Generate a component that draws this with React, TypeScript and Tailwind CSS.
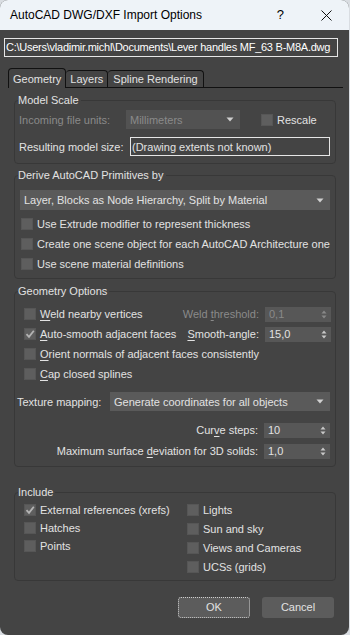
import React from "react";

const label = "text-[11px] leading-[16px] text-[#e2e2e2] whitespace-nowrap";
const dim = "text-[11px] leading-[16px] text-[#8a8a8a] whitespace-nowrap";

function Box({ checked }: { checked?: boolean }) {
	return (
		<span className="w-[12px] h-[12px] shrink-0 bg-[#5e5e5e] border border-[#565656] flex items-center justify-center">
			{checked && (
				<svg width="10" height="10" viewBox="0 0 10 10">
					<path d="M1.5 5.2 L4 7.8 L8.8 1.8" stroke="#b4b4b4" strokeWidth="1.8" fill="none" />
				</svg>
			)}
		</span>
	);
}

function Arrow() {
	return (
		<svg width="8" height="5" viewBox="0 0 8 5" className="shrink-0">
			<path d="M0.5 0.5 H7.5 L4 4.5 Z" fill="#d0d0d0" />
		</svg>
	);
}

function Spin({ value, disabled }: { value: string; disabled?: boolean }) {
	return (
		<div className="w-[66px] h-[15px] bg-[#575757] flex items-center justify-between pl-[4px] pr-[4px]">
			<span className={disabled ? dim : label}>{value}</span>
			<svg width="6" height="9" viewBox="0 0 6 9">
				<path d="M0.5 3.5 L3 0.5 L5.5 3.5 Z M0.5 5.5 L3 8.5 L5.5 5.5 Z" fill={disabled ? "#888" : "#c8c8c8"} />
			</svg>
		</div>
	);
}

function Check({ text, checked, u, className = "" }: { text: string; checked?: boolean; u?: number; className?: string }) {
	return (
		<div className={`flex items-center gap-[4px] ${className}`}>
			<Box checked={checked} />
			<span className={label}>
				{u !== undefined ? (
					<>
						{text.slice(0, u)}
						<span className="underline underline-offset-2">{text[u]}</span>
						{text.slice(u + 1)}
					</>
				) : (
					text
				)}
			</span>
		</div>
	);
}

function Group({ title, className = "", children }: { title: string; className?: string; children: React.ReactNode }) {
	return (
		<fieldset className={`border border-[#383838] rounded-[4px] px-[4px] ${className}`}>
			<legend className={`${label} px-[0px] -ml-[1px] pr-[2px]`}>{title}</legend>
			{children}
		</fieldset>
	);
}

export default function App() {
	return (
		<div className="w-[350px] h-[635px] bg-[#d9dde2] font-['Liberation_Sans',Arial,sans-serif]">
			<div className="w-[349px] h-[635px] rounded-[8px] overflow-hidden bg-[#444444] flex flex-col">
				{/* title bar */}
				<div className="h-[30px] bg-[#eef3f8] flex items-center pl-[10px] shrink-0">
					<span className="text-[12px] text-black flex-1">AutoCAD DWG/DXF Import Options</span>
					<span className="text-[13px] text-black mr-[37px]">?</span>
					<svg width="11" height="11" viewBox="0 0 11 11" className="mr-[17px]">
						<path d="M0.5 0.5 L10.5 10.5 M10.5 0.5 L0.5 10.5" stroke="#111" strokeWidth="1" />
					</svg>
				</div>

				{/* path */}
				<div className="mt-[8px] ml-[4px] w-[334px] h-[19px] border border-[#e6e6e6] text-[11px] leading-[17px] text-white pl-[1px] whitespace-nowrap overflow-hidden tracking-[-0.25px]">
					C:\Users\vladimir.michl\Documents\Lever handles MF_63 B-M8A.dwg
				</div>

				{/* tabs */}
				<div className="mt-[12px] ml-[8px] w-[335px] h-[19px] flex items-end border-b border-[#111]">
					<div className="h-[20px] -mb-[1px] px-[4px] border border-b-0 border-[#111] rounded-t-[4px] bg-[#444444] flex items-center">
						<span className={label}>Geometry</span>
					</div>
					<div className="h-[17px] px-[4px] border border-b-0 border-l-0 border-[#111] rounded-t-[4px] flex items-center">
						<span className={label}>Layers</span>
					</div>
					<div className="h-[17px] px-[5px] border border-b-0 border-l-0 border-[#111] rounded-t-[4px] flex items-center">
						<span className={label}>Spline Rendering</span>
					</div>
				</div>

				<div className="ml-[14px] w-[322px] flex flex-col">
					<Group title="Model Scale" className="mt-[4px] pb-[7px]">
						<div className="flex items-center mt-[2px] h-[19px]">
							<span className={`${dim} w-[107px]`}>Incoming file units:</span>
							<div className="w-[114px] h-[19px] bg-[#525252] flex items-center justify-between pl-[4px] pr-[6px]">
								<span className={dim}>Millimeters</span>
								<Arrow />
							</div>
							<Check text="Rescale" className="ml-[21px]" />
						</div>
						<div className="flex items-center mt-[8px]">
							<span className={`${label} w-[111px]`}>Resulting model size:</span>
							<div className="w-[200px] h-[19px] border border-[#e6e6e6] flex items-center pl-[1px]">
								<span className={label}>(Drawing extents not known)</span>
							</div>
						</div>
					</Group>

					<Group title="Derive AutoCAD Primitives by" className="mt-[3px] pb-[4px]">
						<div className="ml-[1px] mt-[7px] w-[310px] h-[20px] bg-[#5a5a5a] flex items-center justify-between pl-[4px] pr-[6px]">
							<span className={label}>Layer, Blocks as Node Hierarchy, Split by Material</span>
							<Arrow />
						</div>
						<div className="flex flex-col ml-[2px] mt-[4px]">
							<Check text="Use Extrude modifier to represent thickness" className="h-[20px]" />
							<Check text="Create one scene object for each AutoCAD Architecture one" className="h-[20px]" />
							<Check text="Use scene material definitions" className="h-[20px]" />
						</div>
					</Group>

					<Group title="Geometry Options" className="mt-[4px] pb-[7px]">
						<div className="flex flex-col mt-[5px]">
							<div className="flex items-center h-[20px]">
								<Check text="Weld nearby vertices" u={0} className="ml-[5px] flex-1" />
								<span className={`${dim} mr-[6px]`}>
									Weld <span className="underline underline-offset-2">t</span>hreshold:
								</span>
								<Spin value="0,1" disabled />
							</div>
							<div className="flex items-center h-[20px]">
								<Check text="Auto-smooth adjacent faces" checked u={0} className="ml-[5px] flex-1" />
								<span className={`${label} mr-[6px]`}>
									<span className="underline underline-offset-2">S</span>mooth-angle:
								</span>
								<Spin value="15,0" />
							</div>
							<Check text="Orient normals of adjacent faces consistently" u={0} className="ml-[5px] h-[20px]" />
							<Check text="Cap closed splines" u={0} className="ml-[5px] h-[20px]" />
						</div>
						<div className="flex items-center mt-[8px] -ml-[2px]">
							<span className={`${label} w-[93px]`}>Texture mapping:</span>
							<div className="w-[220px] h-[19px] bg-[#5a5a5a] flex items-center justify-between pl-[4px] pr-[6px]">
								<span className={label}>Generate coordinates for all objects</span>
								<Arrow />
							</div>
						</div>
						<div className="flex items-center justify-end mt-[11px] pr-[1px]">
							<span className={`${label} mr-[6px]`}>
								Cur<span className="underline underline-offset-2">v</span>e steps:
							</span>
							<Spin value="10" />
						</div>
						<div className="flex items-center justify-end mt-[5px] pr-[1px]">
							<span className={`${label} mr-[6px]`}>
								Maximum surface <span className="underline underline-offset-2">d</span>eviation for 3D solids:
							</span>
							<Spin value="1,0" />
						</div>
					</Group>

					<Group title="Include" className="mt-[17px] pb-[4px]">
						<div className="grid grid-cols-[168px_1fr] mt-[1px]">
							<div className="flex flex-col ml-[5px]">
								<Check text="External references (xrefs)" checked className="h-[18px]" />
								<Check text="Hatches" className="h-[18px]" />
								<Check text="Points" className="h-[18px]" />
							</div>
							<div className="flex flex-col -mt-[1px]">
								<Check text="Lights" className="h-[19px]" />
								<Check text="Sun and sky" className="h-[19px]" />
								<Check text="Views and Cameras" className="h-[19px]" />
								<Check text="UCSs (grids)" className="h-[19px]" />
							</div>
						</div>
					</Group>
				</div>

				{/* buttons */}
				<div className="flex gap-[12px] mt-[16px] ml-[178px]">
					<button className="w-[72px] h-[21px] bg-[#5c5c5c] rounded-[3px] border border-dotted border-[#cfcfcf] text-[11px] text-[#e2e2e2]">
						OK
					</button>
					<button className="w-[72px] h-[21px] bg-[#5c5c5c] rounded-[3px] text-[11px] text-[#e2e2e2]">
						Cancel
					</button>
				</div>
			</div>
		</div>
	);
}
